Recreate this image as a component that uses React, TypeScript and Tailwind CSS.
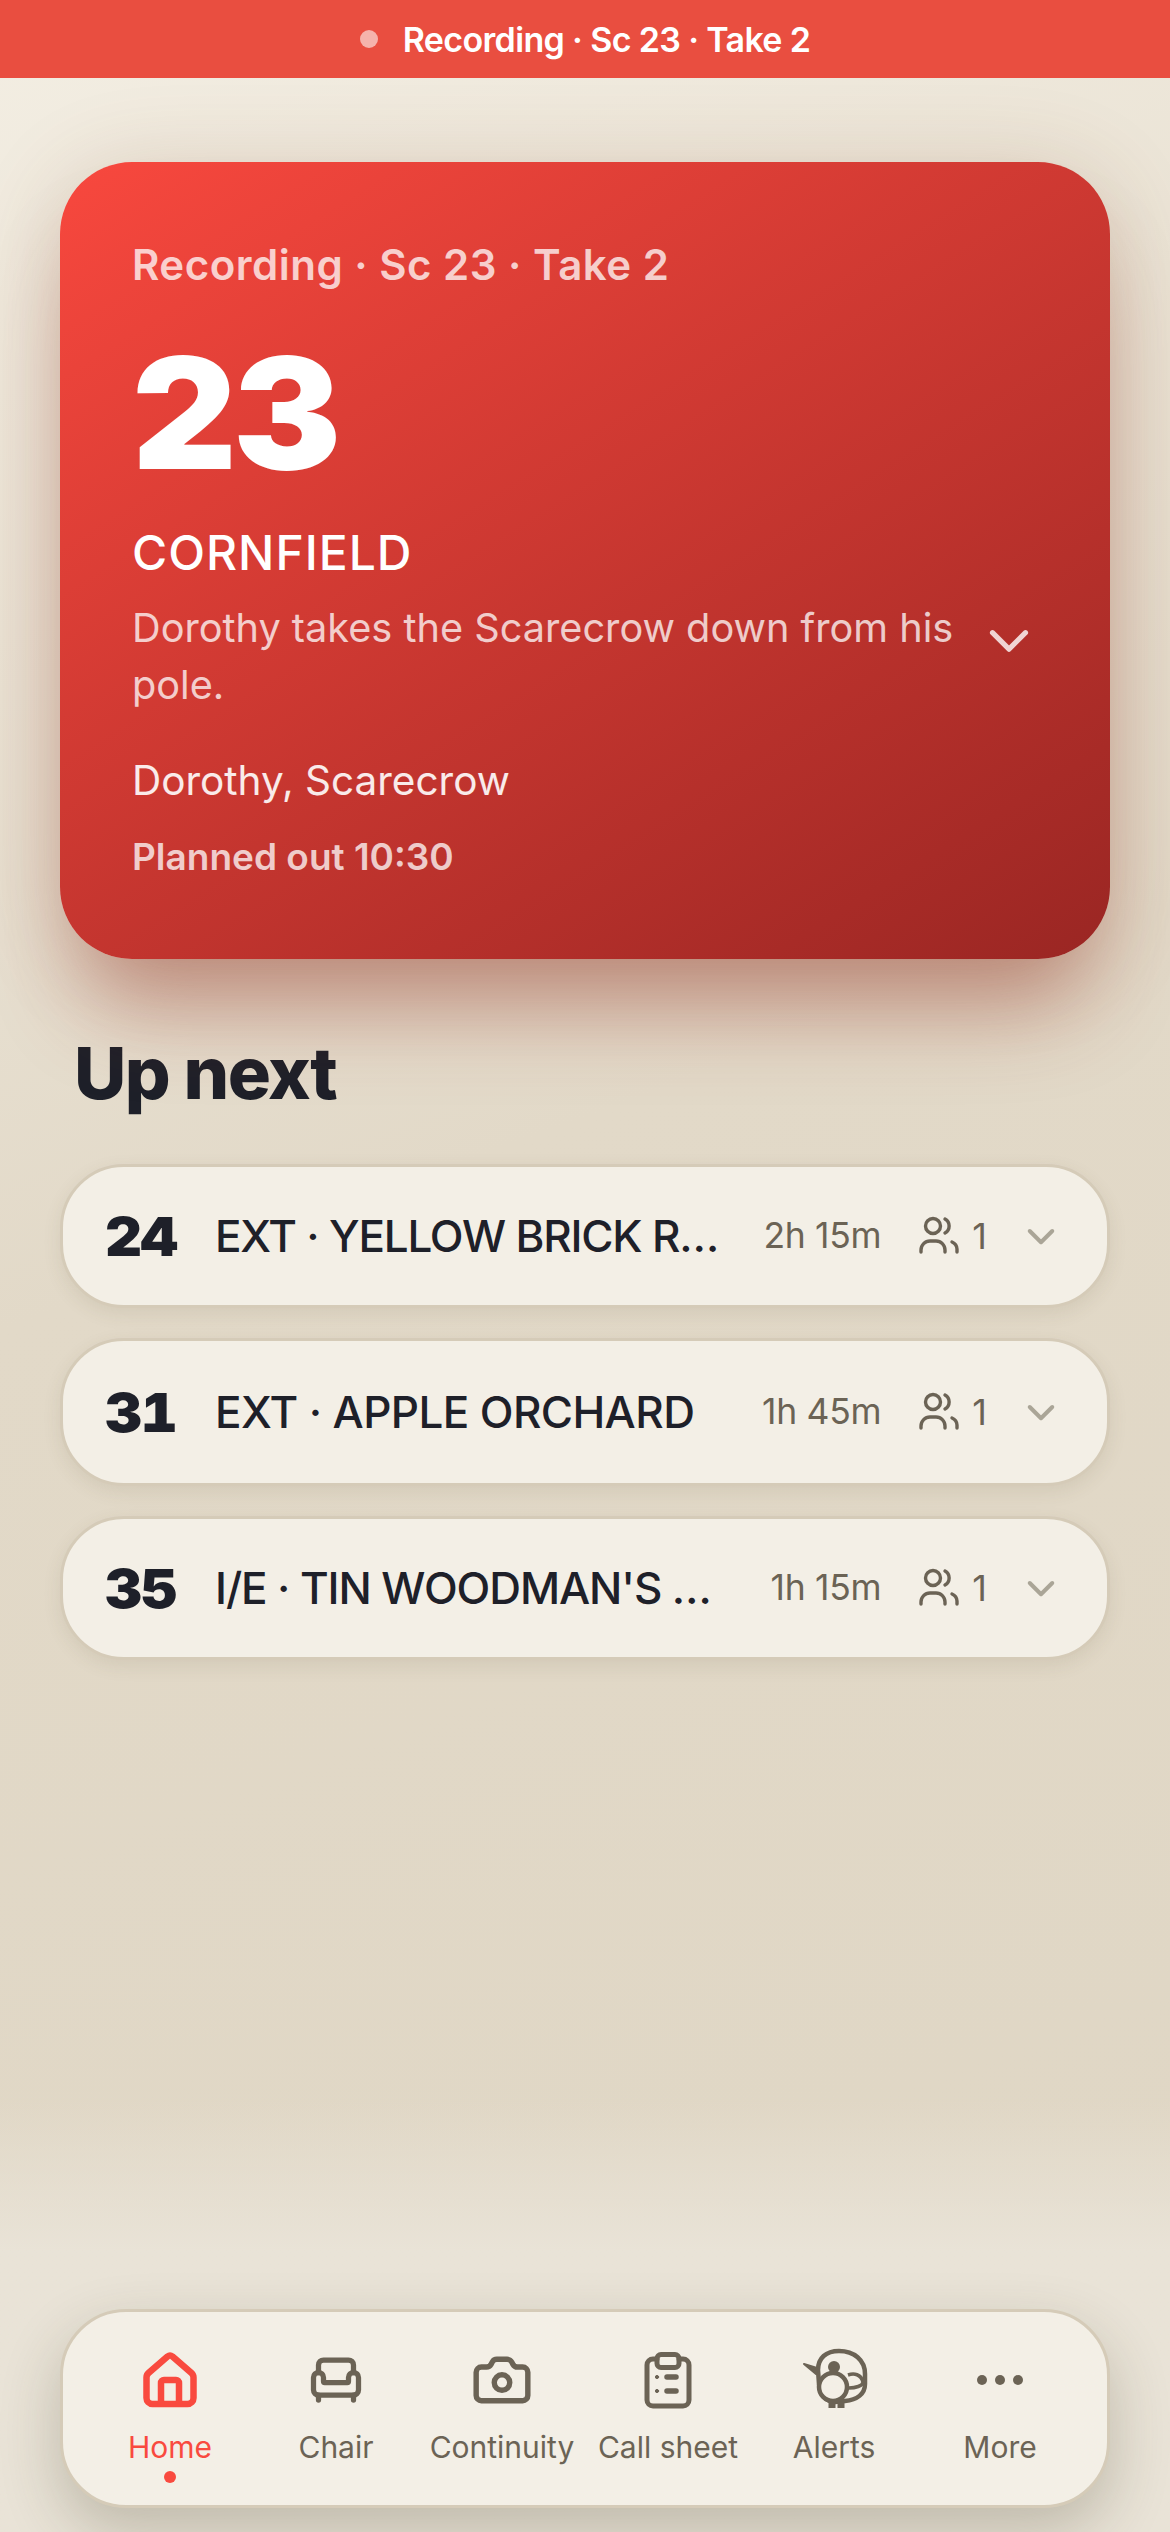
import React from 'react';
import { Armchair, Camera } from 'lucide-react';

const scenes = [
  { num: '24', title: 'EXT · YELLOW BRICK R…', time: '2h 15m', height: 'h-[144px]', tracking: 'tracking-[-1.2px]' },
  { num: '31', title: 'EXT · APPLE ORCHARD', time: '1h 45m', height: 'h-[148px]', tracking: 'tracking-[-0.6px]' },
  { num: '35', title: "I/E · TIN WOODMAN'S …", time: '1h 15m', height: 'h-[144px]', tracking: 'tracking-[-1.1px]' },
];

const HomeIcon = () => (
  <svg width="72" height="72" viewBox="0 0 72 72" fill="none" stroke="#f94a3f" strokeWidth="6.5" strokeLinejoin="round">
    <path d="M33.5 12.5a4 4 0 0 1 5 0L57.5 29a6 6 0 0 1 2 4.5V54a6 6 0 0 1-6 6H18.5a6 6 0 0 1-6-6V33.5a6 6 0 0 1 2-4.5Z" />
    <path d="M27 60V39a3 3 0 0 1 3-3h12a3 3 0 0 1 3 3v21" />
  </svg>
);

const ClipboardIcon = () => (
  <svg width="72" height="72" viewBox="0 0 72 72" fill="none" stroke="#6b6355" strokeWidth="5" strokeLinecap="round">
    <path d="M25 15h-4a6 6 0 0 0-6 6v35a6 6 0 0 0 6 6h30a6 6 0 0 0 6-6V21a6 6 0 0 0-6-6h-4" />
    <rect x="25" y="10.5" width="22" height="13" rx="4" />
    <path d="M35 33h9M35 47h9" strokeWidth="5.5" />
    <circle cx="25" cy="33" r="1.6" fill="#6b6355" strokeWidth="1" />
    <circle cx="25" cy="47" r="1.6" fill="#6b6355" strokeWidth="1" />
  </svg>
);

const BirdIcon = () => (
  <svg width="72" height="72" viewBox="18 4 72 72" fill="none" stroke="#6b6355" strokeWidth="4.5" strokeLinejoin="round">
    <path d="M38 30c0-12 8-19 21-19 15 0 26 9 26 23v10c0 10-8 16-20 17l-10 1c-9 0-15-8-16-18Z" />
    <path d="M24 24l13 4-1 6Z" fill="#6b6355" strokeWidth="2" />
    <circle cx="54" cy="27" r="6" fill="#6b6355" stroke="none" />
    <circle cx="53" cy="47" r="14" fill="#f3efe6" />
    <path d="M68 35c6-2 13-1 15 7 0 4-8 6-14 6" strokeWidth="3.5" />
    <path d="M52 62v6M61 62v6" strokeWidth="7" />
  </svg>
);

const DotsIcon = () => (
  <svg width="72" height="72" viewBox="0 0 72 72" fill="#6b6355">
    <circle cx="18" cy="36" r="5" />
    <circle cx="36" cy="36" r="5" />
    <circle cx="54" cy="36" r="5" />
  </svg>
);

const PeopleIcon = () => (
  <svg width="42" height="40" viewBox="0 0 42 40" fill="none" stroke="#6b6355" strokeWidth="3.4" strokeLinecap="round" className="shrink-0">
    <circle cx="15" cy="10" r="7.5" />
    <path d="M3 36v-2a9 9 0 0 1 9-9h6a9 9 0 0 1 9 9v2" />
    <path d="M27 3a8 8 0 0 1 0 14" />
    <path d="M34 26a8 8 0 0 1 5 7v3" />
  </svg>
);

const Chevron = ({ className, stroke, size, width }: { className?: string; stroke: string; size: number; width: number }) => (
  <svg width={size} height={size} viewBox="0 0 24 24" fill="none" stroke={stroke} strokeWidth={width} strokeLinecap="round" strokeLinejoin="round" className={className}>
    <path d="M3 8l9 9 9-9" />
  </svg>
);

const tabs = [
  { label: 'Home', icon: <HomeIcon />, active: true },
  { label: 'Chair', icon: <Armchair size={60} strokeWidth={2.1} color="#6b6355" /> },
  { label: 'Continuity', icon: <Camera size={62} strokeWidth={2.1} color="#6b6355" /> },
  { label: 'Call sheet', icon: <ClipboardIcon /> },
  { label: 'Alerts', icon: <BirdIcon /> },
  { label: 'More', icon: <DotsIcon /> },
];

export default function App() {
  return (
    <div className="w-[1170px] h-[2532px] flex flex-col overflow-hidden bg-linear-[160deg] from-[#f3eee3] via-[#e2d9c8] via-45% to-[#dfd6c4] font-['Inter','Noto_Sans',sans-serif]">
      <div className="h-[78px] shrink-0 bg-[#e94e40] flex items-center justify-center gap-[25px] text-white">
        <span className="w-[18px] h-[18px] rounded-full bg-[#f5b3ac]"></span>
        <span className="text-[34px] font-semibold tracking-[-0.65px]">Recording · Sc 23 · Take 2</span>
      </div>

      <div className="px-[60px] pt-[84px]">
        <section className="relative h-[797px] rounded-[72px] px-[72px] pt-[78px] bg-linear-[148deg] from-[#f8483e] to-[#9a2623] shadow-[0_70px_90px_-24px_rgba(150,50,35,0.42),0_10px_90px_rgba(130,70,40,0.2)]">
          <p className="text-[42px] leading-[50px] font-semibold tracking-[0.5px] text-white/75">Recording · Sc 23 · Take 2</p>
          <p className="mt-[43px] origin-left scale-x-[1.055] text-[154px] leading-[160px] font-black tracking-[-4px] text-white">23</p>
          <h2 className="mt-[32px] text-[48px] leading-[56px] font-medium tracking-[1px] text-white">CORNFIELD</h2>
          <div className="mt-[19px] flex items-start">
            <p className="w-[835px] text-[39.7px] leading-[57px] text-white/75">Dorothy takes the Scarecrow down from his pole.</p>
            <Chevron className="ml-[20px] mt-[18px] shrink-0" stroke="rgba(255,255,255,0.8)" size={44} width={2.8} />
          </div>
          <p className="mt-[40px] text-[40.5px] leading-[54px] text-white/90">Dorothy, Scarecrow</p>
          <p className="mt-[26px] text-[37px] leading-[46px] font-semibold text-white/75">Planned out 10:30</p>
        </section>

        <h2 className="mt-[72px] ml-[14px] text-[72px] leading-[84px] font-extrabold tracking-[-1.5px] text-[#1e2029]">Up next</h2>

        <div className="mt-[49px] flex flex-col gap-[30px]">
          {scenes.map((s) => (
            <div key={s.num} className={`${s.height} rounded-[64px] border-[3px] border-[#d5cbb8] bg-[#f3efe6] pl-[42px] pr-[51px] flex items-center shadow-[0_6px_18px_rgba(90,75,50,0.1)]`}>
              <span className="w-[110px] shrink-0 origin-left scale-x-[1.06] text-[54px] font-black tracking-[-1px] tabular-nums text-[#1e2029]">{s.num}</span>
              <span className={`flex-1 min-w-0 whitespace-nowrap text-[44px] font-medium ${s.tracking} text-[#1e2029]`}>{s.title}</span>
              <span className="shrink-0 text-[35.5px] text-[#6b6355] tracking-[-0.3px]">{s.time}</span>
              <span className="ml-[37px] mr-[39px] flex items-center gap-[12px] text-[36px] text-[#6b6355]">
                <PeopleIcon />
                <span>1</span>
              </span>
              <Chevron stroke="#aaa597" size={30} width={3.2} />
            </div>
          ))}
        </div>
      </div>

      <div className="mt-auto h-[432px] flex flex-col justify-end px-[60px] pb-[24px] bg-linear-to-b from-transparent to-[#e9e3d7] to-35%">
        <nav className="h-[199px] rounded-[66px] border-[3px] border-[#d5cbb8] bg-[#f3efe6] px-[24px] pt-[32px] grid grid-cols-6 shadow-[0_24px_60px_rgba(60,55,30,0.24)]">
          {tabs.map((t) => (
            <div key={t.label} className="flex flex-col items-center">
              <div className="h-[72px] flex items-center justify-center">{t.icon}</div>
              <span className={`mt-[11px] text-[30px] leading-[40px] whitespace-nowrap ${t.active ? 'text-[#f94a3f]' : 'text-[#6b6355]'}`}>{t.label}</span>
              {t.active && <span className="mt-[4px] w-[12px] h-[12px] rounded-full bg-[#f94a3f]"></span>}
            </div>
          ))}
        </nav>
      </div>
    </div>
  );
}
